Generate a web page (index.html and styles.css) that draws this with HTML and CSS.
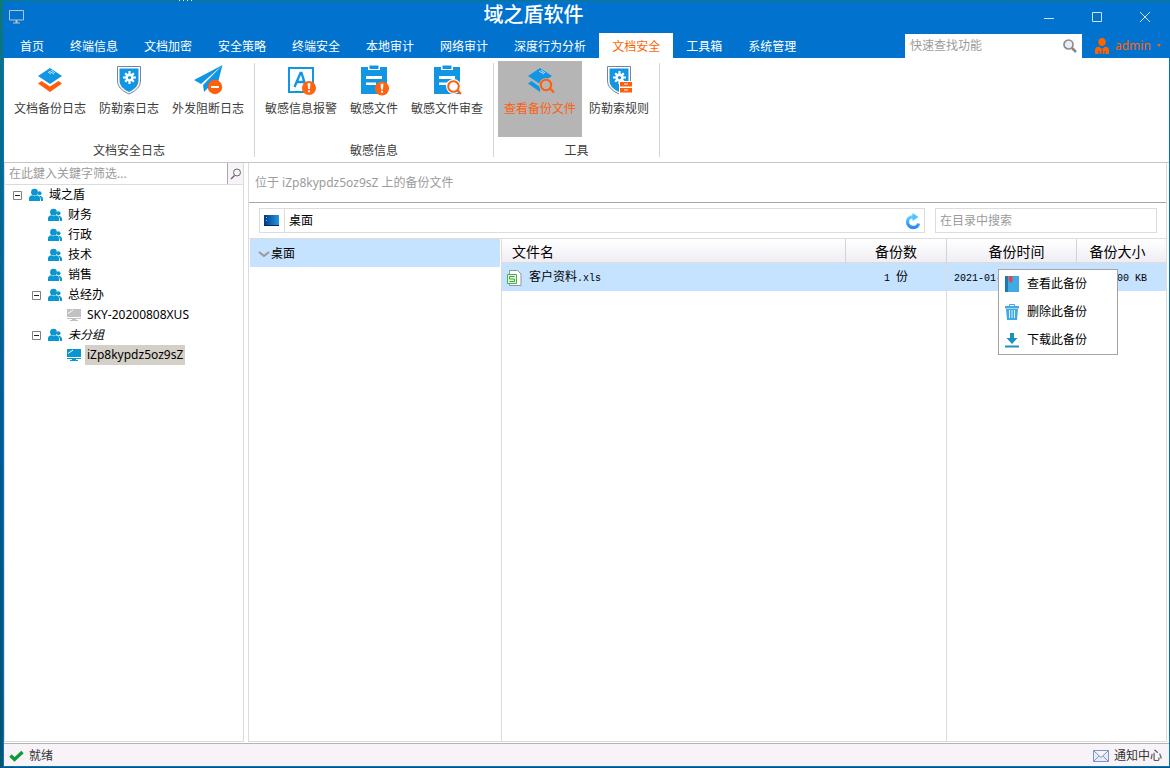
FILE: index.html
```html
<!DOCTYPE html>
<html lang="zh-CN">
<head>
<meta charset="utf-8">
<title>域之盾软件</title>
<link rel="stylesheet" href="styles.css">
</head>
<body>
<svg class="defs" aria-hidden="true">
  <symbol id="users" viewBox="0 0 14 14"><g fill="#0a97d1"><circle cx="5.500" cy="4.200" r="3.400"/><path d="M0 13v-2.500q0-2.500 3-3.200l2.500 1 2.500-1q3 .7 3 3.200V13z"/><circle cx="10.500" cy="5.200" r="2"/><path d="M10 7.700q4 .3 4 3.300v2h-2q0-4-2-5.300z"/></g></symbol>
  <symbol id="gear" viewBox="0 0 12 12"><g stroke="#fff" stroke-width="2" fill="none"><path d="M6 0v12M0 6h12M2 2l8 8M10 2l-8 8" /></g><circle cx="6" cy="6" r="3.800" fill="#fff"/><circle cx="6" cy="6" r="1.500" fill="#1296e3"/></symbol>
  <symbol id="clipboard" viewBox="0 0 32 32"><path fill="#1296e3" d="M3 3h7v3h12V3h7v27H3z"/><path fill="#1296e3" d="M11.500 1.500h9V5h-9z"/><path fill="#fff" d="M8 12h16v3H8zM8 18.500h10v2.500H8z"/></symbol>
  <symbol id="alert" viewBox="0 0 16 16"><circle cx="8" cy="8" r="7.500" fill="#ff6510"/><path fill="#fff" d="M6.500 3h3l-.5 6H7zM7 10.500h2v2H7z"/></symbol>
  <symbol id="collapse" viewBox="0 0 9 9"><path fill="#fff" stroke="#808080" d="M.5.5h8v8h-8z"/><path stroke="#222" d="M2 4.500h5"/></symbol>
  <symbol id="monitor" viewBox="0 0 14 14"><path fill="currentColor" d="M0 1h14v8H0zM0 10h14v1H9v1h2v1H3v-1h2v-1H0z"/><path stroke="#fff" d="M1 5.500l5-3.500"/></symbol>
</svg>
<div class="window">
  <header>
    <div class="titlebar">
      <div class="appicon"><svg width="16" height="14" viewBox="0 0 16 14"><path fill="none" stroke="#b9c4cd" d="M.5.5h14v9.500H.5zM4 13h7"/><path stroke="#b9c4cd" stroke-width="2" d="M7.500 10v3"/></svg></div>
      <h1>域之盾软件</h1>
      <div class="controls">
        <button aria-label="最小化"><svg width="12" height="12"><path d="M1 7.500h10"/></svg></button>
        <button aria-label="最大化"><svg width="12" height="12"><path d="M1.500 1.500h9v9h-9z"/></svg></button>
        <button aria-label="关闭"><svg width="12" height="12"><path d="M1 1l10 10M11 1L1 11"/></svg></button>
      </div>
    </div>
    <div class="menubar">
      <nav>
        <a href="#">首页</a><a href="#">终端信息</a><a href="#">文档加密</a><a href="#">安全策略</a><a href="#">终端安全</a><a href="#">本地审计</a><a href="#">网络审计</a><a href="#">深度行为分析</a><a href="#" class="active">文档安全</a><a href="#">工具箱</a><a href="#">系统管理</a>
      </nav>
      <label class="quick"><input type="text" placeholder="快速查找功能" aria-label="快速查找功能"><svg width="14" height="14" viewBox="0 0 14 14"><path stroke="#858585" stroke-width="2.500" d="M8.500 8.500l4.500 4.500"/><circle cx="5.500" cy="5.500" r="4.500" fill="#e8eef4" stroke="#8d8d8d" stroke-width="1.700"/></svg></label>
      <button class="account"><svg width="14" height="16" viewBox="0 0 14 16"><path fill="#ff6300" d="M7 0c5 0 5 8 0 8S2 0 7 0zM0 16v-4q0-3 3.500-3.500L7 11l3.500-2.500Q14 9 14 12v4h-3.500v-3h-1v3h-1.800l-.2-4h-1l-.2 4H4.500v-3h-1v3z"/></svg><span>admin</span><svg width="4" height="3"><path fill="#ff6300" d="M0 0h4L2 3z"/></svg></button>
    </div>
  </header>

  <section class="ribbon">
    <div class="group">
      <div class="tools">
        <button><svg viewBox="0 0 32 32"><path fill="#1296e3" d="M16 4l12 8-12 8-12-8z"/><path stroke="#bfe4fa" d="M15 7l5 3M17 6l4 3M14 8l3 2" fill="none"/><path fill="#ff5f0a" d="M4 19.500L7.500 17l8.500 5.500 8.500-5.500 3.500 2.500L16 28z"/></svg>文档备份日志</button>
        <button><svg viewBox="0 0 32 32"><path fill="#fff" stroke="#77839a" d="M4.500 2.500h23V17q0 8-11.500 13Q4.500 25 4.500 17z"/><path fill="#1296e3" d="M6.500 4.500h19V17q0 6.500-9.500 11Q6.500 23.500 6.500 17z"/><use href="#gear" x="10" y="7" width="13" height="13"/></svg>防勒索日志</button>
        <button><svg viewBox="0 0 32 32"><path fill="#1296e3" d="M30.500 1L2 16l7 4zM30.500 1L11 21l1 7 4-4 8 2z"/><circle cx="23" cy="23" r="7.200" fill="#ff5f0a"/><path fill="#fff" d="M19 22h8v2h-8z"/></svg>外发阻断日志</button>
      </div>
      <div class="caption">文档安全日志</div>
    </div>
    <div class="group">
      <div class="tools">
        <button><svg viewBox="0 0 32 32"><path fill="#fff" stroke="#1296e3" stroke-width="2" d="M4 4h24v24H4z"/><path fill="none" stroke="#1296e3" stroke-width="2.400" d="M9.500 23l6-14h1l4.500 14M12 18h8"/><use href="#alert" x="16.500" y="16.500" width="15" height="15"/></svg>敏感信息报警</button>
        <button><svg viewBox="0 0 32 32"><use href="#clipboard"/><use href="#alert" x="16.500" y="17" width="15" height="15"/></svg>敏感文件</button>
        <button><svg viewBox="0 0 32 32"><use href="#clipboard"/><circle cx="22.500" cy="22.500" r="7.500" fill="#fff"/><path stroke="#ff5f0a" stroke-width="2.200" fill="#fff" d="M26 26l4 4"/><circle cx="22.500" cy="22.500" r="5.300" fill="#fff" stroke="#ff5f0a" stroke-width="2"/></svg>敏感文件审查</button>
      </div>
      <div class="caption">敏感信息</div>
    </div>
    <div class="group">
      <div class="tools">
        <button class="current"><svg viewBox="0 0 32 32"><path fill="#1296e3" d="M16 4l12 8-12 8-12-8zM4 19.500L7.500 17l8.500 6v5z"/><path stroke="#bfe4fa" d="M15 7l5 3M17 6l4 3" fill="none"/><circle cx="22" cy="21" r="7" fill="#b5b5b5"/><path stroke="#ff5f0a" stroke-width="2.200" d="M26 24.500l4 4"/><circle cx="22" cy="21" r="5.200" fill="none" stroke="#ff5f0a" stroke-width="2"/></svg>查看备份文件</button>
        <button><svg viewBox="0 0 32 32"><path fill="#fff" stroke="#77839a" d="M4.500 2.500h23V17q0 8-11.500 13Q4.500 25 4.500 17z"/><path fill="#1296e3" d="M6.500 4.500h19V17q0 6.500-9.500 11Q6.500 23.500 6.500 17z"/><use href="#gear" x="10" y="7" width="13" height="13"/><path fill="#fff" d="M16 17h15v14H16z"/><path fill="#ff5f0a" d="M17 18h12v4.500H17zM17 24h12v4.500H17z"/><path stroke="#fff" d="M21 20h4M21 26h4"/></svg>防勒索规则</button>
      </div>
      <div class="caption">工具</div>
    </div>
  </section>

  <main>
    <aside>
      <div class="filter"><input type="text" placeholder="在此鍵入关鍵字筛选..." aria-label="关键字筛选"><button aria-label="筛选"><svg width="12" height="12" viewBox="0 0 12 12"><circle cx="7" cy="4.500" r="3.500" fill="none" stroke="#666"/><path stroke="#666" stroke-width="1.500" d="M4.500 7.500L1 11"/></svg></button></div>
      <ul class="tree">
        <li><svg class="exp"><use href="#collapse"/></svg><svg class="ico"><use href="#users"/></svg><span>域之盾</span></li>
        <li class="l2"><i class="exp"></i><svg class="ico"><use href="#users"/></svg><span>财务</span></li>
        <li class="l2"><i class="exp"></i><svg class="ico"><use href="#users"/></svg><span>行政</span></li>
        <li class="l2"><i class="exp"></i><svg class="ico"><use href="#users"/></svg><span>技术</span></li>
        <li class="l2"><i class="exp"></i><svg class="ico"><use href="#users"/></svg><span>销售</span></li>
        <li class="l2"><svg class="exp"><use href="#collapse"/></svg><svg class="ico"><use href="#users"/></svg><span>总经办</span></li>
        <li class="l3"><i class="exp"></i><svg class="ico offline"><use href="#monitor"/></svg><span>SKY-20200808XUS</span></li>
        <li class="l2"><svg class="exp"><use href="#collapse"/></svg><svg class="ico"><use href="#users"/></svg><em>未分组</em></li>
        <li class="l3"><i class="exp"></i><svg class="ico online"><use href="#monitor"/></svg><span class="picked">iZp8kypdz5oz9sZ</span></li>
      </ul>
    </aside>

    <section class="content">
      <p class="where">位于 iZp8kypdz5oz9sZ 上的备份文件</p>
      <div class="address">
        <div class="path">
          <svg class="desk" width="15" height="11"><defs><linearGradient id="dg"><stop offset="0" stop-color="#023a86"/><stop offset="1" stop-color="#2398df"/></linearGradient></defs><path fill="url(#dg)" d="M0 0h15v11H0z"/><path fill="#6cc7f5" d="M2 2h1v1H2zM2 5h1v1H2z"/><path fill="#01295c" d="M0 10h15v1H0z"/></svg>
          <input type="text" value="桌面" aria-label="路径">
          <button aria-label="刷新"><svg width="16" height="18" viewBox="0 0 16 18"><defs><linearGradient id="rg" x2="0" y2="1"><stop offset="0" stop-color="#5ad0ff"/><stop offset="1" stop-color="#2b8bf2"/></linearGradient></defs><path fill="none" stroke="url(#rg)" stroke-width="3.300" d="M9 5C4 4.500 2.500 7.500 2.500 10c0 3.500 3 5.500 5.500 5.500 3 0 5-1.500 5.500-4"/><path fill="#4fc4fc" d="M7.500 1l6 4-6 4z"/></svg></button>
        </div>
        <input class="find" type="text" placeholder="在目录中搜索" aria-label="在目录中搜索">
      </div>
      <div class="browser">
        <div class="folders"><button><svg width="12" height="7"><path fill="none" stroke="#999" stroke-width="2" d="M1 1l5 4 5-4"/></svg>桌面</button></div>
        <div class="files">
          <table>
            <thead><tr><th class="name">文件名</th><th class="count">备份数</th><th class="time">备份时间</th><th class="size">备份大小</th></tr></thead>
            <tbody><tr><td><div class="file"><svg width="15" height="16" viewBox="0 0 15 16"><path fill="#fff" stroke="#8d9a94" d="M2.500.5h8l3.500 3.500v11.500H2.500z"/><path fill="#e6f6e6" stroke="#48b14c" d="M.5 4.500h9v9h-9z"/><path fill="none" stroke="#3aa83f" d="M7.500 6.500h-5V9h5v2.500h-5"/></svg><span>客户资料<b class="mono">.xls</b></span></div></td><td class="count"><b class="mono">1 </b>份</td><td class="time"><b class="mono">2021-01-</b></td><td class="size"><b class="mono">00 KB</b></td></tr></tbody>
          </table>
          <div class="rest"><div></div></div>
          <div class="menu" role="menu">
            <button role="menuitem"><svg width="16" height="16" viewBox="0 0 16 16"><path fill="#1979b0" d="M1 0h3v16H1z"/><path fill="#3fabe2" d="M4 0h11v16H4z"/><path fill="#e8434e" d="M5 0h3.500v7L6.700 5.500 5 7z"/></svg>查看此备份</button>
            <button role="menuitem"><svg width="16" height="16" viewBox="0 0 16 16"><path fill="none" stroke="#3fabe2" d="M5.500 2V.5h5V2"/><path fill="#3fabe2" d="M1 2h14v2.500H1zM2 5h12l-1 11H3z"/><path stroke="#d9effa" d="M5.500 6v8M8 6v8M10.500 6v8"/></svg>删除此备份</button>
            <button role="menuitem"><svg width="16" height="16" viewBox="0 0 16 16"><path fill="#1b91bf" d="M6 1h4v5h3.500L8 12 2.500 6H6zM1 13.500h14v2H1z"/></svg>下载此备份</button>
          </div>
        </div>
      </div>
    </section>
  </main>

  <footer>
    <span class="state"><svg width="15" height="12" viewBox="0 0 15 12"><path fill="none" stroke="#0c9b35" stroke-width="3.400" d="M1.500 5.500L5.500 9.500 13.500 2"/></svg>就绪</span>
    <button><svg width="16" height="12" viewBox="0 0 16 12"><path fill="#e6edfa" stroke="#7f94c4" d="M.5.500h15v11H.5zM.5.500L8 7.500 15.500.5M.5 11.500L6 6M15.500 11.500L10 6"/></svg>通知中心</button>
  </footer>
</div>
</body>
</html>
```

FILE: styles.css
```css
* { box-sizing: border-box; }
body {
  margin: 0;
  height: 100vh;
  padding: 1px 0 1px 3px;
  display: flex;
  background:
    repeating-linear-gradient(90deg, #e8f4f4 0 1px, transparent 1px 4px) 179px 0 / 14px 1px no-repeat,
    linear-gradient(#0d7a7a, #0a6f86 12%, #015a90 60%, #00566a);
  font: 12px/16px "Noto Sans", "Noto Sans CJK SC", sans-serif;
  color: #000;
}
button, input { font: inherit; color: inherit; border: 0; padding: 0; margin: 0; background: none; border-radius: 0; outline: 0; min-width: 0; }
button { cursor: pointer; display: flex; align-items: center; white-space: nowrap; }
svg { flex: none; display: block; }
.defs { position: absolute; width: 0; height: 0; }
.window { flex: 1; min-width: 0; display: flex; flex-direction: column; background: #fff; border: solid #0173cf; border-width: 0 1px 1px; }

header { background: #0173cf; color: #fff; }
.titlebar { display: flex; align-items: center; height: 32px; }
.appicon { width: 38px; padding-left: 5px; }
h1 { flex: 1; margin: 0; padding-bottom: 4px; text-align: center; font-size: 20px; line-height: 28px; font-weight: 500; }
.controls { display: flex; }
.controls button { width: 48px; height: 32px; justify-content: center; }
.controls path { fill: none; stroke: #d5e3ef; }
.menubar { display: flex; height: 25px; }
nav { display: flex; flex: 1; padding-left: 3px; }
nav a { padding: 2px 13px 0; line-height: 23px; height: 25px; color: #fff; text-decoration: none; white-space: nowrap; }
nav a.active { background: #fff; color: #ff6300; }
.quick { display: flex; align-items: center; width: 177px; height: 24px; margin-top: 1px; padding: 0 5px; background: #fff; }
.quick input { flex: 1; }
::placeholder { color: #9b9b9b; opacity: 1; }
.account { width: 87px; padding-left: 13px; gap: 6px; color: #ff6300; }

.ribbon { display: flex; height: 105px; padding-top: 3px; border-bottom: 1px solid #c5c5c9; }
.group { display: flex; flex-direction: column; padding: 0 4px; border-right: 1px solid; border-image: linear-gradient(transparent 3px, #d5d5d8 3px, #d5d5d8 95px, transparent 95px) 1; color: #3c3c3c; }
.tools { display: flex; gap: 1px; height: 76px; }
.tools button { flex-direction: column; gap: 5px; padding: 3px 6px 0; }
.tools svg { width: 32px; height: 32px; }
.tools .current { background: #b5b5b5; color: #ff5f0a; }
.caption { margin-top: 6px; text-align: center; }

main { flex: 1; min-height: 0; display: flex; gap: 4px; padding: 0 2px 1px 0; }
aside { width: 240px; border: solid #dcdcdc; border-width: 0 1px 1px; }
.filter { display: flex; height: 22px; border-bottom: 1px solid #dcdcdc; }
.filter input { flex: 1; padding-left: 4px; }
.filter button { width: 16px; justify-content: center; background: #f7f3f8; border-left: 1px solid #a8a8a8; }
.tree { list-style: none; margin: 0; padding: 0; }
.tree li { display: flex; align-items: center; height: 20px; padding-left: 8px; white-space: nowrap; }
.tree .l2 { padding-left: 27px; }
.tree .l3 { padding-left: 46px; }
.exp { width: 9px; height: 9px; margin-right: 7px; }
.ico { width: 14px; height: 14px; margin-right: 4px; }
.offline { color: #c2c0c2; }
.online { color: #0a97d1; }
.tree span, .tree em { padding: 0 2px; line-height: 20px; }
.tree .picked { background: #d4d0c8; }

.content { flex: 1; min-width: 0; display: flex; flex-direction: column; border: solid #dcdcdc; border-width: 0 1px 1px; }
.where { margin: 0; padding: 0 6px; line-height: 39px; color: #9b9b9b; border-bottom: 1px solid #a8a8a8; }
.address { display: flex; gap: 10px; padding: 5px 9px 5px 10px; }
.path { flex: 1; display: flex; height: 25px; border: 1px solid #dcdcdc; }
.desk { margin: 6px 5px 6px 4px; }
.path input { flex: 1; padding-left: 4px; border-left: 1px solid #dcdcdc; }
.path button { width: 22px; justify-content: center; }
.find { width: 222px; height: 25px; padding-left: 4px; border: 1px solid #dcdcdc; }
.browser { flex: 1; display: flex; border-top: 1px solid #dcdcdc; padding-left: 1px; }
.folders { width: 252px; padding-right: 1px; border-right: 1px solid #dcdcdc; }
.folders button { width: 100%; height: 28px; gap: 1px; padding: 2px 0 0 8px; background: #c5e2ff; }
.files { position: relative; flex: 1; display: flex; flex-direction: column; }
table { width: 100%; table-layout: fixed; border-collapse: separate; border-spacing: 0; }
th { height: 24px; padding: 2px 0 0; font-size: 14px; line-height: 20px; font-weight: 400; background: linear-gradient(#fff, #f0edf3); border-right: 1px solid #cfd3df; border-bottom: 1px solid #dcdcdc; }
th.name { text-align: left; padding-left: 10px; }
th.count { width: 101px; }
th.time { width: 130px; padding-left: 10px; }
th.size { width: 89px; padding-right: 8px; border-right: 0; }
td { height: 28px; padding: 1px 0 0; background: #c5e2ff; }
td.count { text-align: center; border-right: 1px solid #dcdcdc; }
td.time { padding-left: 7px; }
td.size { text-align: right; padding-right: 19px; }
.file { display: flex; align-items: center; gap: 7px; padding-left: 5px; }
.mono { font: 10px/16px "Liberation Mono", monospace; white-space: pre; }
.rest { flex: 1; padding-right: 219px; }
.rest div { height: 100%; border-right: 1px solid #dcdcdc; }
.menu { position: absolute; top: 30px; right: 48px; width: 120px; background: #fff; border: 1px solid #a3a3a3; }
.menu button { width: 100%; height: 28px; gap: 7px; padding-left: 5px; }

footer { display: flex; justify-content: space-between; height: 23px; padding: 1px 7px 0 5px; background: #f7f3f8; border-top: 1px solid #b4b4b4; color: #333; }
.state, footer button { display: flex; align-items: center; gap: 5px; }
```
